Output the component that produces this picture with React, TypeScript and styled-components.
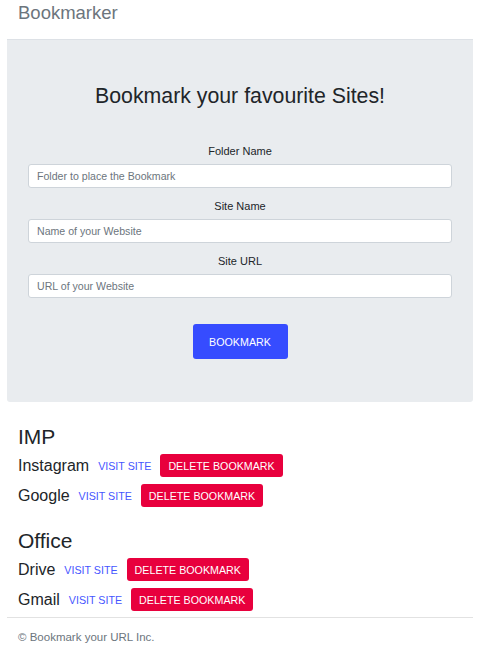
import styled, { createGlobalStyle } from 'styled-components'

const GlobalStyle = createGlobalStyle`
  body {
    margin: 0;
    font-family: "Liberation Sans", Arial, sans-serif;
    color: #212529;
    background: #fff;
  }
`

const Page = styled.div`
  padding: 0 7px;
`

const Header = styled.header`
  height: 40px;
  display: flex;
  align-items: flex-start;
  padding: 2px 11px 0;
  box-sizing: border-box;
  border-bottom: 1px solid #dde1e6;
`

const Brand = styled.h3`
  margin: 0;
  font-size: 18.5px;
  line-height: 22px;
  font-weight: 400;
  color: #6c757d;
`

const Jumbotron = styled.section`
  background: #e9ecef;
  border-radius: 0 0 3px 3px;
  padding: 43px 21px 43px;
  display: flex;
  flex-direction: column;
  align-items: center;
`

const Title = styled.h2`
  margin: 0;
  font-size: 21.3px;
  line-height: 26px;
  font-weight: 400;
`

const Form = styled.form`
  width: 100%;
  margin-top: 34px;
  display: flex;
  flex-direction: column;
  align-items: center;
  gap: 10px;
`

const Field = styled.div`
  width: 100%;
  display: flex;
  flex-direction: column;
  align-items: center;
  gap: 5px;
`

const Label = styled.label`
  font-size: 11px;
  line-height: 16px;
`

const Input = styled.input`
  width: 100%;
  height: 24px;
  box-sizing: border-box;
  border: 1px solid #ced4da;
  border-radius: 3px;
  padding: 0 8px;
  font-family: inherit;
  font-size: 10.6px;
  color: #495057;
  background: #fff;

  &::placeholder {
    color: #6c757d;
  }
`

const SubmitButton = styled.button`
  margin-top: 16px;
  height: 35px;
  width: 95px;
  border: none;
  border-radius: 3px;
  background: #364cff;
  color: #fff;
  font-family: inherit;
  font-size: 10.7px;
`

const Lists = styled.div`
  padding: 22px 11px 6px;
  display: flex;
  flex-direction: column;
`

const Folder = styled.div`
  display: flex;
  flex-direction: column;
  gap: 7px;

  & + & {
    margin-top: 21px;
  }
`

const FolderTitle = styled.h3`
  margin: 0 0 -2px;
  font-size: 21px;
  line-height: 25px;
  font-weight: 400;
`

const Row = styled.div`
  display: flex;
  align-items: center;
  height: 23px;
  gap: 9px;
`

const SiteName = styled.span`
  font-size: 16px;
  line-height: 20px;
`

const VisitLink = styled.a`
  font-size: 10.7px;
  color: #4656ff;
  text-decoration: none;
`

const DeleteButton = styled.button`
  height: 23px;
  padding: 0 8px;
  border: none;
  border-radius: 3px;
  background: #e8003d;
  color: #fff;
  font-family: inherit;
  font-size: 10.7px;
`

const Footer = styled.footer`
  border-top: 1px solid #e2e2e2;
  padding: 11px 11px;
  font-size: 11.5px;
  line-height: 16px;
  color: #6c757d;
`

const folders = [
  { name: 'IMP', sites: ['Instagram', 'Google'] },
  { name: 'Office', sites: ['Drive', 'Gmail'] },
]

export default function App() {
  return (
    <>
      <GlobalStyle />
      <Page>
        <Header>
          <Brand>Bookmarker</Brand>
        </Header>
        <Jumbotron>
          <Title>Bookmark your favourite Sites!</Title>
          <Form onSubmit={(e) => e.preventDefault()}>
            <Field>
              <Label>Folder Name</Label>
              <Input placeholder="Folder to place the Bookmark" />
            </Field>
            <Field>
              <Label>Site Name</Label>
              <Input placeholder="Name of your Website" />
            </Field>
            <Field>
              <Label>Site URL</Label>
              <Input placeholder="URL of your Website" />
            </Field>
            <SubmitButton type="submit">BOOKMARK</SubmitButton>
          </Form>
        </Jumbotron>
        <Lists>
          {folders.map((folder) => (
            <Folder key={folder.name}>
              <FolderTitle>{folder.name}</FolderTitle>
              {folder.sites.map((site) => (
                <Row key={site}>
                  <SiteName>{site}</SiteName>
                  <VisitLink href="#">VISIT SITE</VisitLink>
                  <DeleteButton>DELETE BOOKMARK</DeleteButton>
                </Row>
              ))}
            </Folder>
          ))}
        </Lists>
        <Footer>© Bookmark your URL Inc.</Footer>
      </Page>
    </>
  )
}
